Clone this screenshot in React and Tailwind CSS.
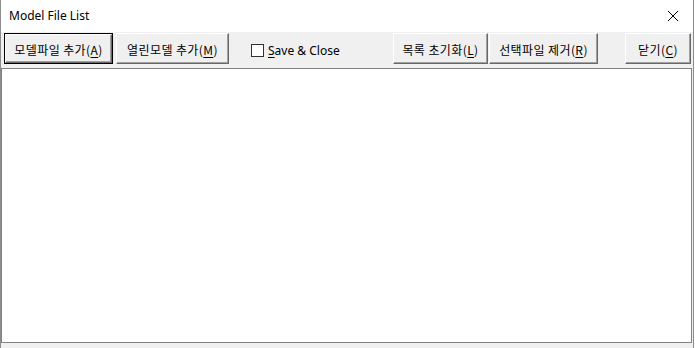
import React from 'react';

const ui = { fontFamily: '"Noto Sans", "Noto Sans CJK KR", sans-serif' };
const ko = { fontFamily: '"Noto Sans CJK KR", "Noto Sans", sans-serif' };

const Label = ({ text, hotkey }) => (
  <span style={ko} className="pt-[3px] text-[12px] leading-none tracking-[0.4px] text-black">
    {text}(<span className="underline underline-offset-2">{hotkey}</span>)
  </span>
);

const Button = ({ text, hotkey, width, isDefault, className = '' }) => (
  <button
    type="button"
    className={`flex h-[31px] shrink-0 items-center justify-center ${isDefault ? 'border border-black' : ''} ${className}`}
    style={{ width }}
  >
    <span className="flex h-full w-full items-center justify-center border border-t-white border-l-white border-r-[#696969] border-b-[#696969] bg-[#f0f0f0] shadow-[inset_-1px_-1px_0_#a0a0a0]">
      <Label text={text} hotkey={hotkey} />
    </span>
  </button>
);

const App = () => {
  return (
    <main className="h-[348px] w-[695px] bg-white" style={ui}>
      <div className="flex h-full w-[694px] flex-col border-x border-[#8c8c8c] bg-[#f0f0f0]">
        <div className="flex h-[32px] shrink-0 items-center justify-between bg-white pl-[8px] pr-[8px]">
          <span className="text-[12px] text-black">Model File List</span>
          <svg width="12" height="12" viewBox="0 0 12 12" className="mr-[6px]">
            <path d="M1 1 L11 11 M11 1 L1 11" stroke="#000" strokeWidth="1" />
          </svg>
        </div>

        <div className="flex h-[36px] shrink-0 items-start pl-[3px] pt-[1px]">
          <Button text="모델파일 추가" hotkey="A" width={109} isDefault />
          <Button text="열린모델 추가" hotkey="M" width={113} className="ml-[3px]" />
          <label className="ml-[22px] flex h-[31px] items-center gap-[4px] pt-[4px]">
            <span className="h-[13px] w-[13px] border border-[#333333] bg-white" />
            <span className="text-[12px] leading-none text-black">
              <span className="underline underline-offset-2">S</span>ave &amp; Close
            </span>
          </label>
          <Button text="목록 초기화" hotkey="L" width={95} className="ml-auto" />
          <Button text="선택파일 제거" hotkey="R" width={109} className="ml-[1px]" />
          <Button text="닫기" hotkey="C" width={66} className="ml-[27px] mr-[2px]" />
        </div>

        <div className="mr-[1px] flex-1 border border-[#828282] bg-white" />
        <div className="h-[5px] shrink-0" />
      </div>
    </main>
  );
};

export default App;
